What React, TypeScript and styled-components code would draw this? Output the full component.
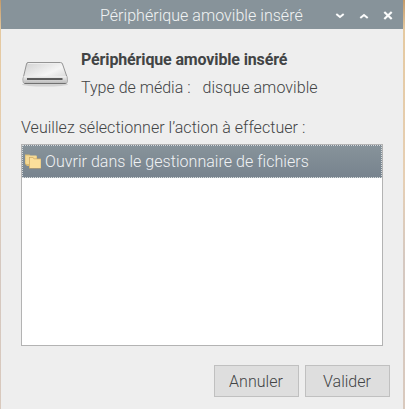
import React from "react";
import styled, { createGlobalStyle } from "styled-components";

const GlobalStyle = createGlobalStyle`
  * { box-sizing: border-box; }
  html, body { margin: 0; padding: 0; overflow: hidden; }
  body { font-family: Roboto, "Noto Sans", sans-serif; font-weight: 300; font-size: 16px; }
`;

const Desktop = styled.div`
  width: 405px;
  height: 409px;
  padding: 0 2px 0 1px;
  background: linear-gradient(#c49a68 0, #e5c9a0 30px, #e6cfb4 180px, #d5c8c0 260px, #d9c9bd 100%);
`;

const Dialog = styled.section`
  display: flex;
  flex-direction: column;
  height: 100%;
  background: #eeeeee;
  color: #424445;
`;

const TitleBar = styled.header`
  display: grid;
  grid-template-columns: 1fr auto;
  align-items: center;
  height: 29px;
  flex: none;
  padding: 2px 9px 0 99px;
  background: #87939a;
  color: #f1f3f4;
`;

const Controls = styled.div`
  display: flex;
  gap: 12px;
`;

const Control = styled.button`
  display: flex;
  width: 12px;
  height: 12px;
  padding: 0;
  border: 0;
  background: none;
  color: #fbfcfc;
`;

const Text = styled.span<{ $spacing?: number; $bold?: boolean }>`
  font-weight: ${(p) => (p.$bold ? 700 : 300)};
  letter-spacing: ${(p) => p.$spacing ?? 0}px;
  line-height: 20px;
  white-space: pre;
`;

const Body = styled.main`
  display: flex;
  flex-direction: column;
  padding: 20px 14px 0 20px;
`;

const MediaInfo = styled.div`
  display: flex;
  height: 57px;
`;

const DriveIcon = styled.svg`
  width: 48px;
  height: 48px;
  flex: none;
  margin-right: 12px;
`;

const MediaText = styled.div`
  display: flex;
  flex-direction: column;
  gap: 8px;
  padding-top: 1px;
`;

const MediaType = styled.div`
  display: flex;
  gap: 12px;
`;

const Prompt = styled.p`
  display: flex;
  height: 38px;
  margin: 0;
  padding-top: 12px;
`;

const ActionList = styled.div`
  width: 362px;
  height: 202px;
  border: 1px solid #b3b3b3;
  background: #fff;
`;

const Action = styled.div`
  display: flex;
  align-items: center;
  gap: 3px;
  height: 33px;
  padding-left: 2px;
  border: 1px dotted #d6dadd;
  background: linear-gradient(#87939a, #77838e);
  color: #f0f2f4;
`;

const Buttons = styled.div`
  display: flex;
  justify-content: flex-end;
  gap: 6px;
  margin: 19px -1px 0 0;
`;

const Button = styled.button`
  width: 85px;
  height: 32px;
  padding: 2px 1px 0 0;
  border: 1px solid #c0c0c0;
  background: #dedede;
  color: #424445;
  font: inherit;
`;

export default function App() {
  return (
    <>
      <GlobalStyle />
      <Desktop>
        <Dialog>
          <TitleBar>
            <Text $spacing={0.04}>Périphérique amovible inséré</Text>
            <Controls>
              <Control aria-label="Réduire">
                <svg width="12" height="12" fill="none" stroke="currentColor" strokeWidth="2"><path d="M2.3 4 6 7 9.7 4" /></svg>
              </Control>
              <Control aria-label="Agrandir">
                <svg width="12" height="12" fill="none" stroke="currentColor" strokeWidth="2"><path d="M2.3 8 6 5 9.7 8" /></svg>
              </Control>
              <Control aria-label="Fermer">
                <svg width="12" height="12" fill="none" stroke="currentColor" strokeWidth="2.2"><path d="M2.3 2 9.7 9M9.7 2 2.3 9" /></svg>
              </Control>
            </Controls>
          </TitleBar>
          <Body>
            <MediaInfo>
              <DriveIcon viewBox="0 0 48 48">
                <defs>
                  <linearGradient id="driveTop" x1="0" y1="0" x2="1" y2="1">
                    <stop offset="0" stopColor="#d0d0d0" />
                    <stop offset=".55" stopColor="#f5f5f5" />
                    <stop offset="1" stopColor="#c9c9c9" />
                  </linearGradient>
                  <linearGradient id="driveFront" x1="0" y1="0" x2="0" y2="1">
                    <stop offset="0" stopColor="#f0f0f0" />
                    <stop offset="1" stopColor="#bcbcbc" />
                  </linearGradient>
                </defs>
                <ellipse cx="24" cy="35.5" rx="23" ry="2" fill="#d2d2d2" />
                <path d="M7 13.5H39.5Q41 13.5 41.5 15L46 28Q46.7 34.5 45 34.5H3.5Q1.8 34.5 2 30L5.5 15Q5.8 13.5 7 13.5Z" fill="url(#driveTop)" stroke="#949494" />
                <path d="M2.5 27H45.5L46 32.5Q46 34 44.5 34H3.5Q2.3 34 2.5 32Z" fill="url(#driveFront)" />
                <path d="M7 14.5H39" stroke="#eee" />
                <path d="M6 30H41.5" stroke="#303030" strokeWidth="1.6" />
                <path d="M3.5 34.5H44.5" stroke="#707070" />
              </DriveIcon>
              <MediaText>
                <Text $bold $spacing={-0.14}>Périphérique amovible inséré</Text>
                <MediaType>
                  <Text>Type de média :</Text>
                  <Text $spacing={0.07}>disque amovible</Text>
                </MediaType>
              </MediaText>
            </MediaInfo>
            <Prompt>
              <Text $spacing={0.04}>Veuillez sélectionner l’action à effectuer :</Text>
            </Prompt>
            <ActionList>
              <Action>
                <svg width="17" height="15">
                  <path d="M0 .5H4.5L5.5 2H12V12H2L0 10Z" fill="#d9b96f" />
                  <path d="M.5 1.5H11.5V10H1.5L.5 9Z" fill="#f4d995" />
                  <path d="M4 3H8L9 4.5H16V14.5H4Z" fill="#cfaa65" />
                  <path d="M4.8 3.8H7.8L9 5.3H15.7V14H4.8Z" fill="#fbdf9b" />
                </svg>
                <Text $spacing={0.045}>Ouvrir dans le gestionnaire de fichiers</Text>
              </Action>
            </ActionList>
            <Buttons>
              <Button><Text $spacing={0.05}>Annuler</Text></Button>
              <Button><Text>Valider</Text></Button>
            </Buttons>
          </Body>
        </Dialog>
      </Desktop>
    </>
  );
}
